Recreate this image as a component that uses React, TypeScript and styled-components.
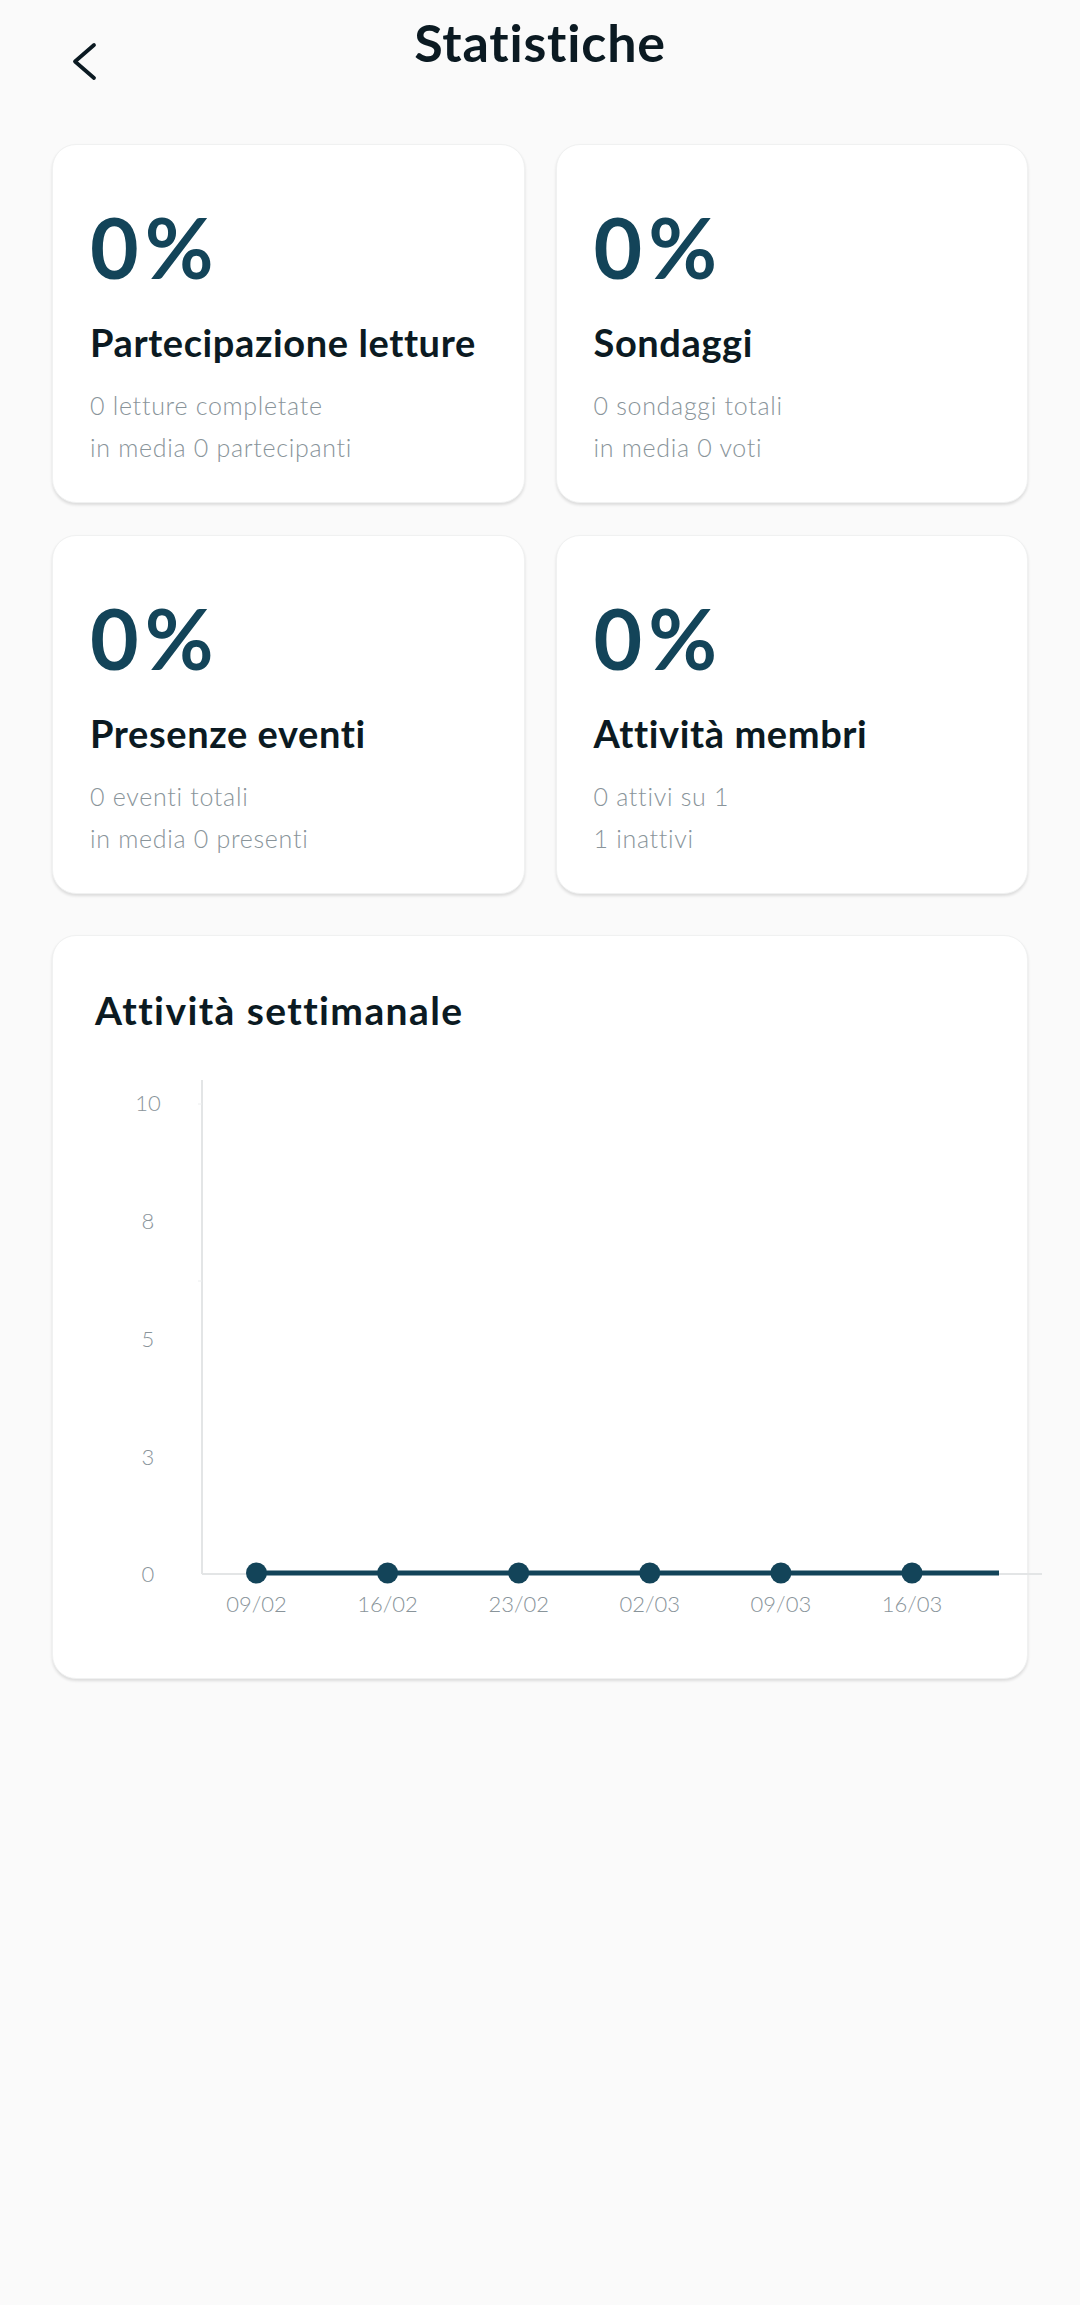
import styled, { createGlobalStyle } from "styled-components";

const GlobalStyle = createGlobalStyle`
  body {
    margin: 0;
    background: #fafafa;
    font-family: "Lato", "Noto Sans", sans-serif;
  }
`;

const stats = [
  {
    value: "0%",
    title: "Partecipazione letture",
    lines: ["0 letture completate", "in media 0 partecipanti"],
  },
  { value: "0%", title: "Sondaggi", lines: ["0 sondaggi totali", "in media 0 voti"] },
  { value: "0%", title: "Presenze eventi", lines: ["0 eventi totali", "in media 0 presenti"] },
  { value: "0%", title: "Attività membri", lines: ["0 attivi su 1", "1 inattivi"] },
];

const weeks = ["09/02", "16/02", "23/02", "02/03", "09/03", "16/03"];
const yTicks = [
  { label: "10", y: 72 },
  { label: "8", y: 190 },
  { label: "5", y: 308 },
  { label: "3", y: 426 },
  { label: "0", y: 543 },
];

export default function App() {
  const x0 = 161.5;
  const step = 131.1;

  return (
    <Page>
      <GlobalStyle />
      <Header>
        <BackButton aria-label="Indietro">
          <svg width="26" height="40" viewBox="0 0 26 40">
            <path
              d="M22 3 L3 19.5 L22 36"
              fill="none"
              stroke="#0b1a22"
              strokeWidth="3.8"
              strokeLinecap="round"
              strokeLinejoin="round"
            />
          </svg>
        </BackButton>
        <Title>Statistiche</Title>
        <div />
      </Header>

      <Grid>
        {stats.map((s) => (
          <StatCard key={s.title}>
            <Value>{s.value}</Value>
            <CardTitle>{s.title}</CardTitle>
            <Details>
              {s.lines.map((l) => (
                <div key={l}>{l}</div>
              ))}
            </Details>
          </StatCard>
        ))}
      </Grid>

      <ChartCard>
        <ChartTitle>Attività settimanale</ChartTitle>
        <Chart width="892" height="600" viewBox="0 0 892 600">
          <line x1="107" y1="48" x2="107" y2="542" stroke="#e3e5e6" strokeWidth="2" />
          <line x1="103" y1="72" x2="107" y2="72" stroke="#eceeef" strokeWidth="1" />
          <line x1="103" y1="249" x2="107" y2="249" stroke="#eceeef" strokeWidth="1" />
          <line x1="107" y1="542" x2="947" y2="542" stroke="#e3e5e6" strokeWidth="2" />
          {yTicks.map((t) => (
            <AxisText key={t.label} x="53" y={t.y + 7} textAnchor="middle">
              {t.label}
            </AxisText>
          ))}
          <line x1={x0} y1="541" x2="904" y2="541" stroke="#134459" strokeWidth="5" />
          {weeks.map((w, i) => (
            <g key={w}>
              <circle cx={x0 + i * step} cy="541" r="10.5" fill="#134459" />
              <AxisText x={x0 + i * step} y="580" textAnchor="middle">
                {w}
              </AxisText>
            </g>
          ))}
        </Chart>
      </ChartCard>
    </Page>
  );
}

const Page = styled.div`
  width: 1080px;
  min-height: 2305px;
  padding: 12px 52px 0;
  box-sizing: border-box;
`;

const Header = styled.header`
  display: grid;
  grid-template-columns: 1fr auto 1fr;
  align-items: start;
`;

const BackButton = styled.button`
  justify-self: start;
  margin: 30px 0 0 20px;
  padding: 0;
  border: none;
  background: none;
  display: flex;
  cursor: pointer;
`;

const Title = styled.h1`
  margin: 0;
  font-size: 52px;
  line-height: 60px;
  font-weight: 700;
  letter-spacing: 0.8px;
  color: #0b1a22;
`;

const Grid = styled.section`
  margin-top: 62px;
  display: grid;
  grid-template-columns: 1fr 1fr;
  column-gap: 31px;
  row-gap: 32px;
`;

const Card = styled.div`
  background: #fff;
  border-radius: 24px;
  border: 1px solid #f0f1f1;
  box-shadow: 0 2px 3px rgba(0, 0, 0, 0.12);
  box-sizing: border-box;
`;

const StatCard = styled(Card)`
  padding: 62px 24px 34px 37px;
  display: flex;
  flex-direction: column;
`;

const Value = styled.div`
  font-size: 84px;
  line-height: 80px;
  font-weight: 700;
  letter-spacing: 6px;
  color: #134459;
`;

const CardTitle = styled.h2`
  margin: 33px 0 0;
  font-size: 38px;
  line-height: 44px;
  font-weight: 700;
  letter-spacing: 0.6px;
  color: #0b1a22;
  white-space: nowrap;
`;

const ChartTitle = styled(CardTitle)`
  font-size: 39px;
  letter-spacing: 1.4px;
`;

const Details = styled.div`
  margin-top: 20px;
  font-size: 25px;
  line-height: 42px;
  font-weight: 300;
  letter-spacing: 0.7px;
  color: #89949a;
`;

const ChartCard = styled(Card)`
  margin-top: 41px;
  padding: 19px 42px 46px;
`;

const Chart = styled.svg`
  display: block;
  overflow: visible;
`;

const AxisText = styled.text`
  font-family: "Lato", "Noto Sans", sans-serif;
  font-size: 22px;
  font-weight: 300;
  fill: #89949a;
`;
